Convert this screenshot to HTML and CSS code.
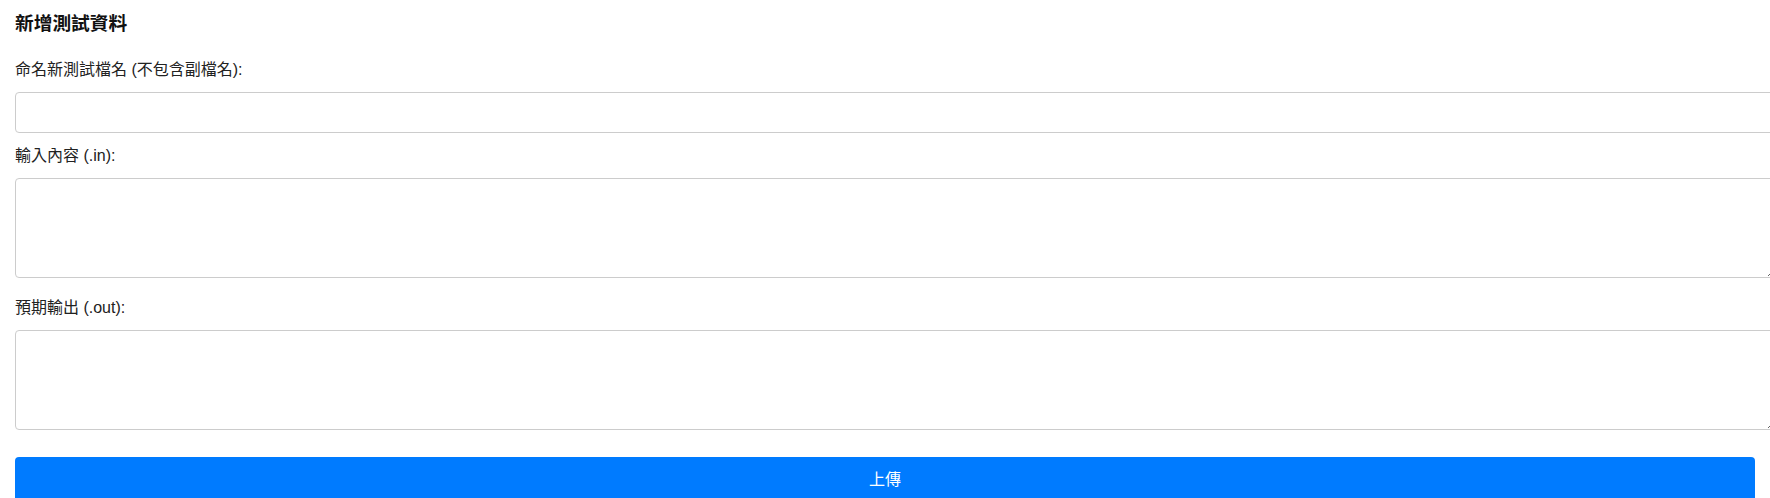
FILE: index.html
```html
<!DOCTYPE html>
<html lang="zh-Hant">
<head>
<meta charset="utf-8">
<title>新增測試資料</title>
<link rel="stylesheet" href="styles.css">
</head>
<body>
<div class="page">
  <h3 class="title">新增測試資料</h3>
  <form class="form">
    <label class="label" for="name">命名新測試檔名 (不包含副檔名):</label>
    <input class="field" id="name" type="text">
    <label class="label label-next" for="in">輸入內容 (.in):</label>
    <textarea class="field area" id="in"></textarea>
    <label class="label label-after-area" for="out">預期輸出 (.out):</label>
    <textarea class="field area" id="out"></textarea>
    <button class="submit" type="button">上傳</button>
  </form>
</div>
</body>
</html>
```

FILE: styles.css
```css
html, body {
  margin: 0;
  padding: 0;
  background: #ffffff;
  overflow: hidden;
}

body {
  font-family: "Liberation Sans", Arial, "Noto Sans CJK TC", sans-serif;
  color: #222;
}

.page {
  padding: 13px 15px 0;
  overflow: hidden;
}

.title {
  margin: 0;
  font-size: 18.72px;
  line-height: 22px;
  font-weight: bold;
  color: #111;
}

.form {
  display: flex;
  flex-direction: column;
  align-items: flex-start;
  margin-top: 23px;
}

.label {
  display: block;
  font-size: 16px;
  line-height: 24px;
  margin-bottom: 10px;
}

.label-next {
  margin-top: 11px;
}

.label-after-area {
  margin-top: 18px;
}

.field {
  display: block;
  box-sizing: content-box;
  width: 100%;
  padding: 10px;
  margin: 0;
  border: 1px solid #cccccc;
  border-radius: 4px;
  font-family: "Liberation Sans", Arial, "Noto Sans CJK TC", sans-serif;
  font-size: 16px;
  line-height: 19px;
  height: 19px;
  background: #ffffff;
  color: #222;
  outline: none;
}

.area {
  height: 78px;
  resize: vertical;
}

.submit {
  display: block;
  box-sizing: border-box;
  width: 100%;
  margin-top: 27px;
  padding: 10px;
  height: 45px;
  border: none;
  border-radius: 4px;
  background: #007bff;
  color: #ffffff;
  font-family: "Liberation Sans", Arial, "Noto Sans CJK TC", sans-serif;
  font-size: 16px;
  line-height: 24px;
}
```
